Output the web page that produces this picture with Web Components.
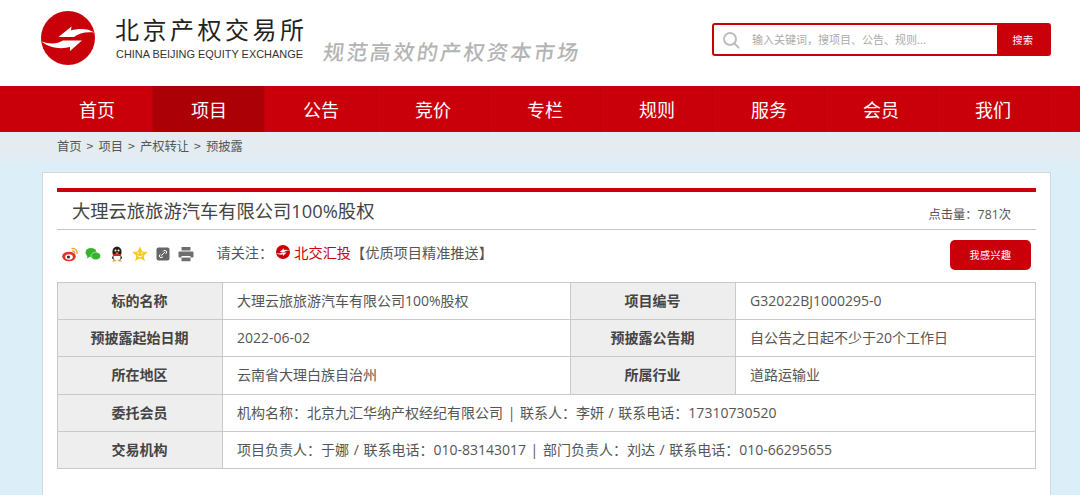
<!DOCTYPE html>
<html lang="zh">
<head>
<meta charset="utf-8">
<title>北京产权交易所</title>
<style>
  html, body { margin: 0; padding: 0; height: 495px; overflow: hidden; }
  body { background: #dceef7; font-family: "Liberation Sans", "Noto Sans CJK SC", sans-serif; color: #444; }
</style>
</head>
<body>
<site-header></site-header>
<site-nav></site-nav>
<bread-crumb></bread-crumb>
<project-card></project-card>

<script>
class SiteHeader extends HTMLElement {
  connectedCallback() {
    this.attachShadow({ mode: 'open' });
    this.shadowRoot.innerHTML = `
      <style>
        :host { display: flex; height: 86px; background: #fff; box-sizing: border-box; padding: 11px 29px 0 41px; }
        .logo { width: 54px; height: 54px; margin-right: 21px; flex: none; }
        .names { width: 187px; padding-top: 4px; flex: none; }
        .cn { font: 400 24px/28px "Noto Sans CJK SC", sans-serif; letter-spacing: 3.500px; color: #222; white-space: nowrap; margin-left: -1px; }
        .en { font: 10.950px/14px "Liberation Sans", sans-serif; color: #333; margin-top: 4px; white-space: nowrap; }
        .slogan { font: 500 21px/26px "Noto Sans CJK SC", sans-serif; letter-spacing: 2.400px; color: #b4b4b4; margin: 27px 0 0 19px; transform: skewX(-8deg); white-space: nowrap; }
        search-box { margin-left: auto; margin-top: 12px; }
      </style>
      <svg class="logo" viewBox="0 0 54 54">
        <circle cx="27" cy="27" r="27" fill="#c9000a"/>
        <path d="M17.500 26L30.500 15.500 30 19.500C38 17 47 17.500 53.500 21.500 46 20.500 38 21.500 33 26Z" fill="#fff"/>
        <path d="M41 29.500L29 40 29 36C20 38.500 8 37 .5 30.500 8 33 16 33.500 22 29.500Z" fill="#fff"/>
      </svg>
      <div class="names">
        <div class="cn">北京产权交易所</div>
        <div class="en">CHINA BEIJING EQUITY EXCHANGE</div>
      </div>
      <div class="slogan">规范高效的产权资本市场</div>
      <search-box></search-box>
    `;
  }
}

class SearchBox extends HTMLElement {
  connectedCallback() {
    this.attachShadow({ mode: 'open' });
    this.shadowRoot.innerHTML = `
      <style>
        :host { display: flex; width: 339px; height: 33px; box-sizing: border-box; border: 2px solid #c9000a; border-radius: 3px; background: #fff; align-items: stretch; }
        svg { width: 18px; height: 18px; margin: 6px 0 0 8px; flex: none; }
        .ph { flex: 1; font: 11px/29px "Noto Sans CJK SC", sans-serif; color: #aaa; padding-left: 12px; white-space: nowrap; }
        .btn { width: 52px; background: #c9000a; color: #fff; font: 10px/29px "Noto Sans CJK SC", sans-serif; text-align: center; letter-spacing: .5px; }
      </style>
      <svg viewBox="0 0 18 18" fill="none" stroke="#bdbdbd" stroke-width="2">
        <circle cx="8" cy="8" r="6"/><path d="M12.500 12.500L16.500 16.500" stroke-linecap="round"/>
      </svg>
      <div class="ph">输入关键词，搜项目、公告、规则...</div>
      <div class="btn">搜索</div>
    `;
  }
}

class SiteNav extends HTMLElement {
  connectedCallback() {
    const items = ['首页', '项目', '公告', '竞价', '专栏', '规则', '服务', '会员', '我们'];
    this.attachShadow({ mode: 'open' });
    this.shadowRoot.innerHTML = `
      <style>
        :host { display: flex; height: 46px; background: #c9000a; padding-left: 41px; }
        div { width: 112px; box-shadow: inset -1px 0 #bd0008; text-align: center; color: #fff; font: 18px/46px "Noto Sans CJK SC", sans-serif; }
        .on { background: #ab0006; }
      </style>
      ${items.map((t, i) => `<div class="${i === 1 ? 'on' : ''}">${t}</div>`).join('')}
    `;
  }
}

class BreadCrumb extends HTMLElement {
  connectedCallback() {
    this.attachShadow({ mode: 'open' });
    this.shadowRoot.innerHTML = `
      <style>
        :host { display: flex; gap: 5px; height: 40px; box-sizing: border-box; padding: 5px 0 0 57px; background: linear-gradient(#e4ecf2 0, #e4ecf2 24px, #dceef7 34px); font: 12.300px/18px "Noto Sans CJK SC", sans-serif; color: #555; white-space: nowrap; }
      </style>
      <span>首页</span><span>&gt;</span><span>项目</span><span>&gt;</span><span>产权转让</span><span>&gt;</span><span>预披露</span>
    `;
  }
}

class ShareIcons extends HTMLElement {
  connectedCallback() {
    this.attachShadow({ mode: 'open' });
    this.shadowRoot.innerHTML = `
      <style>
        :host { display: flex; gap: 7.300px; align-items: center; }
        svg { width: 16px; height: 16px; flex: none; }
      </style>
      <svg viewBox="0 0 16 16"><ellipse cx="7" cy="10.500" rx="6.800" ry="4.800" fill="#e0352b"/><ellipse cx="7" cy="11" rx="3.800" ry="2.800" fill="#fff"/><circle cx="6.500" cy="11" r="1.600" fill="#333"/><path d="M9.500 2.500a4.500 4.500 0 0 1 5.500 5.500M10 5a2 2 0 0 1 2.500 2.500" fill="none" stroke="#f0a030" stroke-width="1.300"/></svg>
      <svg viewBox="0 0 16 16"><ellipse cx="6" cy="6.500" rx="5.500" ry="4.500" fill="#35b52e"/><path d="M2.500 9.500L2 12.500 5 10.500z" fill="#35b52e"/><ellipse cx="10.800" cy="10" rx="4.800" ry="3.800" fill="#35b52e" stroke="#fff" stroke-width=".5"/></svg>
      <svg viewBox="0 0 16 16"><ellipse cx="8" cy="6" rx="4.600" ry="5.500" fill="#1e1e1e"/><path d="M3 11.500C3 8 13 8 13 11.500 13 15 3 15 3 11.500Z" fill="#1e1e1e"/><ellipse cx="8" cy="11" rx="3.600" ry="3.500" fill="#fff"/><path d="M3.500 8h9l-1 2h-7z" fill="#d8232a"/><circle cx="6.500" cy="4.500" r="1" fill="#fff"/><circle cx="9.500" cy="4.500" r="1" fill="#fff"/><path d="M6.500 6.500h3L8 7.600z" fill="#f0b020"/><path d="M3 15.500l2-1.700h2l-.5 1.700zM13 15.500l-2-1.700H9l.5 1.700z" fill="#e8a020"/></svg>
      <svg viewBox="0 0 16 16"><path d="M8 .5l2.300 5 5.300.6-3.900 3.600 1.100 5.300L8 12.300 3.200 15l1.100-5.300L.4 6.100l5.300-.6z" fill="#f9c81e"/><path d="M5.200 7h2M8.800 7h2M5.500 9.500c1.500 1.500 3.500 1.500 5 0" fill="none" stroke="#fff" stroke-width="1"/></svg>
      <svg viewBox="0 0 16 16"><rect x="1.500" y="1.500" width="13" height="13" rx="2" fill="#666"/><path d="M6.200 9.800l3.600-3.600M5.500 8l-.8.800a1.800 1.800 0 0 0 2.500 2.500L8 10.500M10.500 8l.8-.8a1.800 1.800 0 0 0-2.500-2.500L8 5.500" fill="none" stroke="#fff" stroke-width="1"/></svg>
      <svg viewBox="0 0 16 16" fill="#6e6e6e"><rect x="3.500" y="1" width="9" height="3.500" rx=".5"/><rect x=".5" y="5.500" width="15" height="6" rx="1"/><rect x="3.500" y="10" width="9" height="1.200" fill="#fff"/><rect x="3.500" y="12" width="9" height="3.200" rx=".5"/></svg>
    `;
  }
}

class InfoTable extends HTMLElement {
  connectedCallback() {
    this.attachShadow({ mode: 'open' });
    const th = t => `<div class="c th">${t}</div>`;
    const td = (t, w) => `<div class="c td${w ? ' wide' : ''}">${t}</div>`;
    this.shadowRoot.innerHTML = `
      <style>
        :host { display: grid; grid-template-columns: 165px 348px 165px 1fr; grid-auto-rows: 37.200px; border-left: 1px solid #c9c9c9; border-top: 1px solid #c9c9c9; font: 14px/1 "Open Sans", "Noto Sans CJK SC", sans-serif; color: #555; }
        .c { box-sizing: border-box; border-right: 1px solid #c9c9c9; border-bottom: 1px solid #c9c9c9; display: flex; align-items: center; white-space: pre; }
        .th { background: #eeeeee; justify-content: center; font-weight: 700; color: #444; padding-right: 1px; }
        .td { padding-left: 14px; background: #fff; word-spacing: 1px; }
        .wide { grid-column: span 3; }
      </style>
      ${th('标的名称')}${td('大理云旅旅游汽车有限公司100%股权')}${th('项目编号')}${td('G32022BJ1000295-0')}
      ${th('预披露起始日期')}${td('2022-06-02')}${th('预披露公告期')}${td('自公告之日起不少于20个工作日')}
      ${th('所在地区')}${td('云南省大理白族自治州')}${th('所属行业')}${td('道路运输业')}
      ${th('委托会员')}${td('机构名称：北京九汇华纳产权经纪有限公司 | 联系人：李妍 / 联系电话：17310730520', 1)}
      ${th('交易机构')}${td('项目负责人：于娜 / 联系电话：010-83143017 | 部门负责人：刘达 / 联系电话：010-66295655', 1)}
    `;
  }
}

class ProjectCard extends HTMLElement {
  connectedCallback() {
    this.attachShadow({ mode: 'open' });
    this.shadowRoot.innerHTML = `
      <style>
        :host { display: block; width: 1009px; height: 340px; margin-left: 42px; box-sizing: border-box; background: #fff; border: 1px solid #d5d8da; border-bottom: 0; padding: 15px 14px 0; font-family: "Noto Sans CJK SC", sans-serif; }
        .head { border-top: 4px solid #c9000a; height: 37px; border-bottom: 1px solid #c4c4c4; display: flex; justify-content: space-between; align-items: flex-end; }
        h1 { margin: 0 0 5px 15px; font: 400 18.300px/26px "Open Sans", "Noto Sans CJK SC", sans-serif; color: #444; white-space: nowrap; }
        .hits { font-family: "Open Sans", "Noto Sans CJK SC", sans-serif; font-size: 12.300px; line-height: 16px; color: #555; margin: 0 25px 6px 0; }
        .bar { display: flex; align-items: center; height: 52px; padding-right: 5px; }
        share-icons { margin: 0 0 5px 5px; }
        .follow { margin: 0 0 9px 22px; font-size: 14.200px; color: #555; white-space: nowrap; display: flex; align-items: center; }
        .follow svg { width: 14px; height: 14px; margin: 0 4px 0 3px; }
        .follow b { font-weight: 400; color: #c9000a; }
        .btn { margin: 0 0 2px auto; width: 81px; height: 30px; border-radius: 5px; background: #c9000a; color: #fff; font-size: 10px; line-height: 30px; text-align: center; letter-spacing: .5px; }
      </style>
      <div class="head">
        <h1>大理云旅旅游汽车有限公司100%股权</h1>
        <div class="hits">点击量：781次</div>
      </div>
      <div class="bar">
        <share-icons></share-icons>
        <div class="follow">请关注：<svg viewBox="0 0 54 54"><circle cx="27" cy="27" r="27" fill="#c9000a"/><path d="M14 27L31 13 30 19C38 17 47 17.500 53.500 21.500 46 20.500 38 22 33 27Z" fill="#fff"/><path d="M41 29L27 42 27 36C20 38.500 8 37 .5 30.500 8 33 16 33.500 22 29Z" fill="#fff"/></svg><b>北交汇投</b>【优质项目精准推送】</div>
        <div class="btn">我感兴趣</div>
      </div>
      <info-table></info-table>
    `;
  }
}

customElements.define('search-box', SearchBox);
customElements.define('site-header', SiteHeader);
customElements.define('site-nav', SiteNav);
customElements.define('bread-crumb', BreadCrumb);
customElements.define('share-icons', ShareIcons);
customElements.define('info-table', InfoTable);
customElements.define('project-card', ProjectCard);
</script>
</body>
</html>
